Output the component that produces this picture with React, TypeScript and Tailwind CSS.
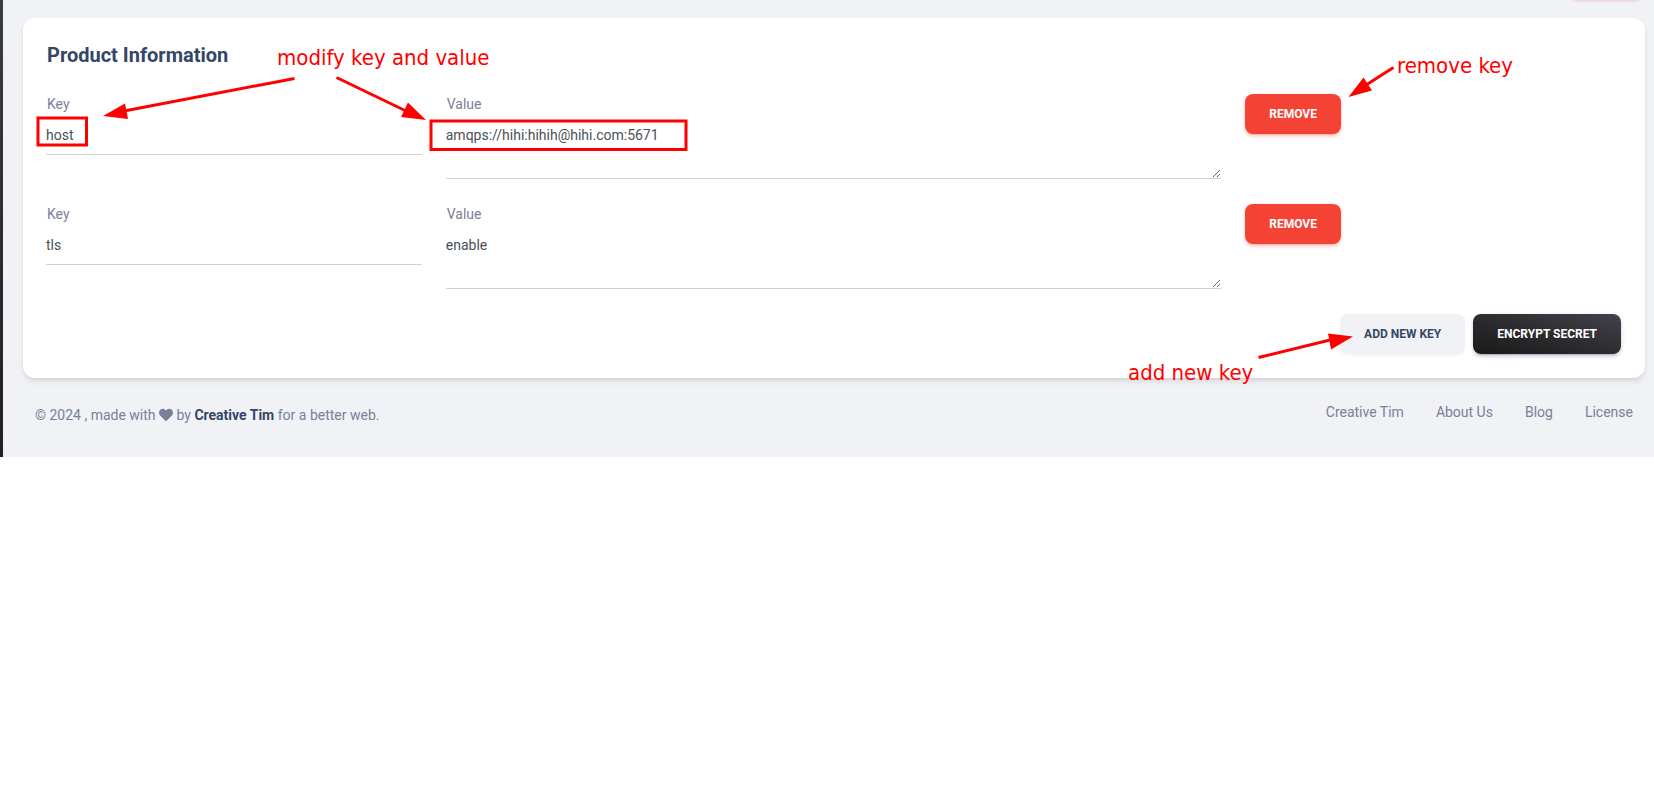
import React, { useState } from "react";
import { FaHeart } from "react-icons/fa";

type Entry = { id: string; key: string; value: string };

const initialEntries: Entry[] = [
  { id: "first", key: "host", value: "amqps://hihi:hihih@hihi.com:5671" },
  { id: "second", key: "tls", value: "enable" },
];

const footerLinks = ["Creative Tim", "About Us", "Blog", "License"];

function EntryRow({
  entry,
  onChange,
  onRemove,
}: {
  entry: Entry;
  onChange: (entry: Entry) => void;
  onRemove: () => void;
}) {
  return (
    <div className="mb-[25px] grid grid-cols-12 items-start gap-x-6">
      <div className="col-span-3 flex flex-col">
        <label htmlFor={`${entry.id}-key`} className="px-px text-sm leading-5 text-[#7b809a]">
          Key
        </label>
        <input
          id={`${entry.id}-key`}
          value={entry.key}
          onChange={(e) => onChange({ ...entry, key: e.target.value })}
          className="h-[41px] w-full border-b border-[#d2d2d2] bg-transparent pt-px text-sm text-[#495057] outline-none"
        />
      </div>
      <div className="col-span-6 flex flex-col">
        <label htmlFor={`${entry.id}-value`} className="px-px text-sm leading-5 text-[#7b809a]">
          Value
        </label>
        <textarea
          id={`${entry.id}-value`}
          value={entry.value}
          onChange={(e) => onChange({ ...entry, value: e.target.value })}
          className="h-[65px] w-full resize border-b border-[#d2d2d2] bg-transparent py-[10px] text-sm leading-[22px] text-[#495057] outline-none"
        />
      </div>
      <div className="col-span-3">
        <button
          type="button"
          onClick={onRemove}
          className="h-10 rounded-lg bg-[#f44335] px-6 text-xs font-bold text-white uppercase shadow-[0_3px_3px_0_rgba(244,67,53,0.15),0_3px_1px_-2px_rgba(244,67,53,0.2),0_1px_5px_0_rgba(244,67,53,0.15)]"
        >
          Remove
        </button>
      </div>
    </div>
  );
}

const noteText =
  "absolute font-['DejaVu_Sans_Condensed','Noto_Sans',sans-serif] text-[22px] leading-8 whitespace-nowrap text-[#ff0000]";

function Annotations() {
  return (
    <div className="pointer-events-none absolute inset-0">
      <svg className="absolute top-0 left-0" width="1654" height="457" viewBox="0 0 1654 457" fill="none">
        <g stroke="#ff0000" strokeWidth="3">
          <rect x="38" y="118" width="48.500" height="27" />
          <rect x="431" y="121" width="255" height="28.500" />
          <path d="M294.500 78.500L124 111" />
          <path d="M336.500 77.500L406 111" />
          <path d="M1393.500 67.500L1366 85" />
          <path d="M1258.500 357.500L1330 340" />
        </g>
        <g fill="#ff0000">
          <path d="M103 116L125 103.500L128 119Z" />
          <path d="M426 120L408 102.500L401 117Z" />
          <path d="M1348.500 97L1363.500 77.500L1372 90.500Z" />
          <path d="M1353 336.500L1328 333.500L1331 349.500Z" />
        </g>
      </svg>
      <span className={`${noteText} top-[42px] left-[277px]`}>modify key and value</span>
      <span className={`${noteText} top-[50px] left-[1397px]`}>remove key</span>
      <span className={`${noteText} top-[357px] left-[1128px]`}>add new key</span>
    </div>
  );
}

export default function App() {
  const [entries, setEntries] = useState(initialEntries);

  return (
    <div className="min-h-screen bg-white font-[Roboto,'Liberation_Sans',sans-serif]">
      <div className="relative flex overflow-hidden bg-[#f0f2f5]">
        <div className="w-[3px] shrink-0 bg-gradient-to-b from-[#3b3b42] to-[#212123]" />
        <div className="absolute -top-10 right-3 h-10 w-[72px] rounded-lg shadow-[0_1px_3px_rgba(233,30,99,0.2)]" />

        <main className="min-w-0 flex-1 pt-[18px] pr-[9px] pl-5">
          <section className="rounded-xl bg-white pt-[23px] pr-6 pb-6 pl-[23px] shadow-[0_4px_6px_-1px_rgba(0,0,0,0.1),0_2px_4px_-1px_rgba(0,0,0,0.06)]">
            <h5 className="mb-[25px] px-px text-xl leading-7 font-bold text-[#344767]">Product Information</h5>
            <form onSubmit={(e) => e.preventDefault()}>
              {entries.map((entry) => (
                <EntryRow
                  key={entry.id}
                  entry={entry}
                  onChange={(next) => setEntries(entries.map((e) => (e.id === next.id ? next : e)))}
                  onRemove={() => setEntries(entries.filter((e) => e.id !== entry.id))}
                />
              ))}
              <div className="flex justify-end gap-2">
                <button
                  type="button"
                  onClick={() => setEntries([...entries, { id: `entry-${Date.now()}`, key: "", value: "" }])}
                  className="h-10 rounded-lg bg-[#f0f2f5] px-6 text-xs font-bold text-[#344767] uppercase shadow-[0_2px_3px_rgba(240,242,245,0.8)]"
                >
                  Add new key
                </button>
                <button
                  type="submit"
                  className="h-10 rounded-lg bg-gradient-to-tr from-[#191919] to-[#42424a] px-6 text-xs font-bold text-white uppercase shadow-[0_3px_3px_0_rgba(52,71,103,0.15),0_3px_1px_-2px_rgba(52,71,103,0.2),0_1px_5px_0_rgba(52,71,103,0.15)]"
                >
                  Encrypt secret
                </button>
              </div>
            </form>
          </section>

          <footer className="flex items-start justify-between px-3 pt-6 pb-[30px] text-sm text-[#7b809a]">
            <p className="pt-px leading-6">
              © 2024 , made with <FaHeart className="inline align-[-2px]" /> by{" "}
              <a href="#creative-tim" className="font-bold text-[#344767]">
                Creative Tim
              </a>{" "}
              for a better web.
            </p>
            <nav className="flex gap-8 leading-5">
              {footerLinks.map((label) => (
                <a key={label} href={`#${label}`}>
                  {label}
                </a>
              ))}
            </nav>
          </footer>
        </main>
        <Annotations />
      </div>
    </div>
  );
}
